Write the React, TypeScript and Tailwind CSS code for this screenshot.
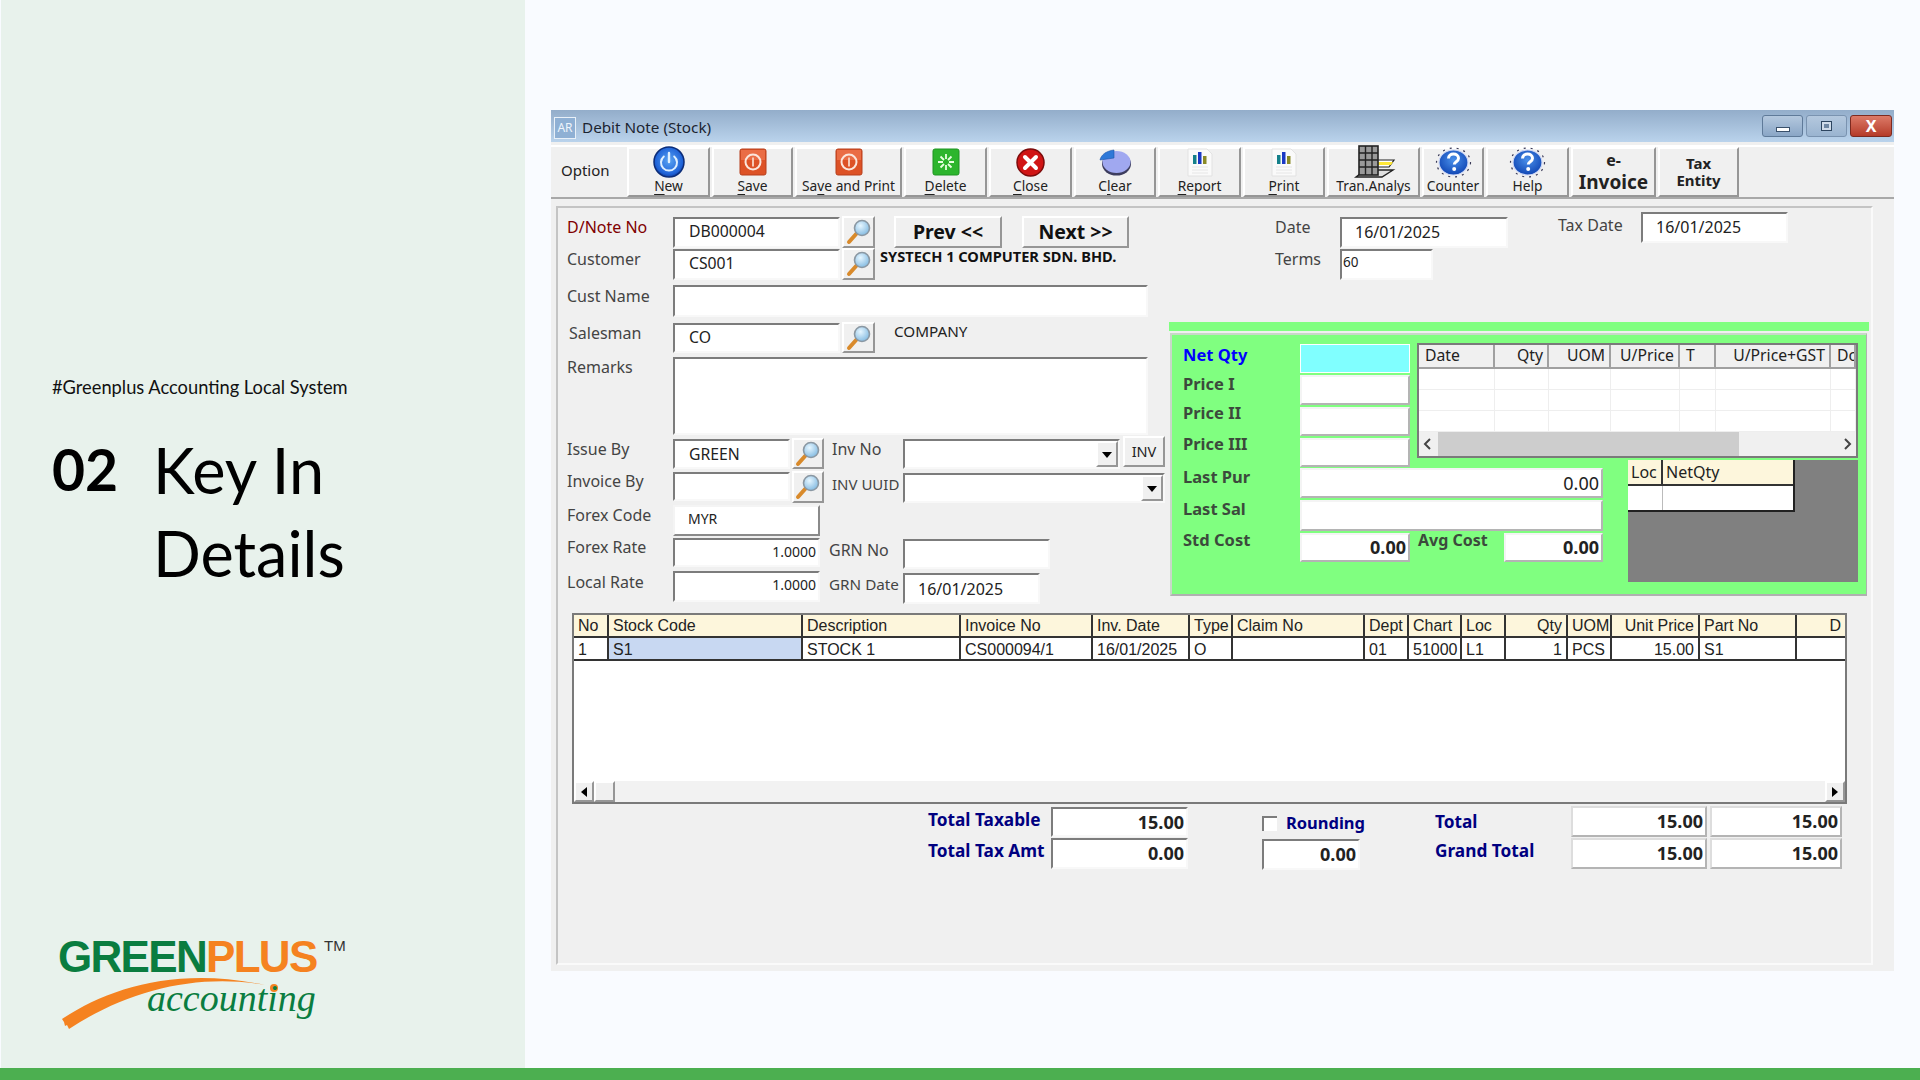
import type { ReactNode } from "react";
import clsx from "clsx";

const Lbl = ({ className, children }: { className?: string; children: ReactNode }) => (
  <div className={clsx("h-[24px] leading-[24px] whitespace-nowrap text-[16px] text-[#444]", className)}>{children}</div>
);

const Field = ({ className, children }: { className?: string; children?: ReactNode }) => (
  <div
    className={clsx(
      "flex items-center overflow-hidden whitespace-nowrap bg-white pb-[2px] border-t-2 border-l-2 border-t-[#7c7c7c] border-l-[#7c7c7c] border-r-2 border-b-2 border-r-[#f8f8f8] border-b-[#f8f8f8] text-[15.75px] text-[#222]",
      className
    )}
  >
    {children}
  </div>
);

const Flat = ({ className, children }: { className?: string; children?: ReactNode }) => (
  <div
    className={clsx(
      "flex items-center justify-end overflow-hidden whitespace-nowrap bg-white border-t-2 border-l-2 border-t-[#f4f4f4] border-l-[#f4f4f4] border-r-2 border-b-2 border-r-[#b4b4b4] border-b-[#b4b4b4] text-[#222]",
      className
    )}
  >
    {children}
  </div>
);

const raised =
  "flex items-center justify-center bg-[#f0f0f0] border-t-2 border-l-2 border-t-white border-l-white border-r-2 border-b-2 border-r-[#969696] border-b-[#969696]";

const Lens = () => (
  <svg width="26" height="26" viewBox="0 0 26 26">
    <defs>
      <radialGradient id="lens" cx="0.4" cy="0.35" r="0.7">
        <stop offset="0" stopColor="#e6f6ff" />
        <stop offset="1" stopColor="#7fb8e0" />
      </radialGradient>
    </defs>
    <path d="M3 23 L11 14" stroke="#d98a2b" strokeWidth="4" strokeLinecap="round" />
    <circle cx="16" cy="9" r="7.5" fill="url(#lens)" stroke="#8b98a3" strokeWidth="1.6" />
  </svg>
);

const LensBtn = ({ className }: { className?: string }) => (
  <div className={clsx(raised, className)}>
    <Lens />
  </div>
);

const Combo = ({ className, btn }: { className?: string; btn: string }) => (
  <Field className={clsx("justify-end !pb-0", className)}>
    <div className={clsx(raised, btn)}>
      <svg width="10" height="6" viewBox="0 0 10 6" className="mt-[2px]">
        <path d="M0 0H10L5 6Z" fill="#000" />
      </svg>
    </div>
  </Field>
);

const IconNew = () => (
  <svg width="32" height="32" viewBox="0 0 32 32" className="shrink-0">
    <defs>
      <radialGradient id="newBlue" cx="0.5" cy="0.45" r="0.6">
        <stop offset="0" stopColor="#5aa4f2" />
        <stop offset="0.75" stopColor="#1f63d8" />
        <stop offset="1" stopColor="#0a2f8f" />
      </radialGradient>
    </defs>
    <circle cx="16" cy="16" r="15" fill="url(#newBlue)" stroke="#0b2c78" strokeWidth="1.5" />
    <path d="M10.8 10.5a8 8 0 1 0 10.4 0" fill="none" stroke="#dff0ff" strokeWidth="2" strokeLinecap="round" />
    <path d="M16 7v9" stroke="#dff0ff" strokeWidth="2.4" strokeLinecap="round" />
  </svg>
);

const IconSave = () => (
  <svg width="28" height="28" viewBox="0 0 28 28" className="shrink-0">
    <rect x="1" y="1" width="26" height="26" rx="2" fill="#dd5226" stroke="#b73f1c" />
    <rect x="2" y="2" width="24" height="10" fill="#ea6d45" />
    <circle cx="14" cy="14" r="7.5" fill="none" stroke="#fbe6dc" strokeWidth="2" />
    <rect x="13" y="9.5" width="2" height="9" fill="#f6c9b5" />
  </svg>
);

const IconDelete = () => (
  <svg width="28" height="28" viewBox="0 0 28 28" className="shrink-0">
    <rect x="1" y="1" width="26" height="26" rx="2" fill="#2db52d" stroke="#1f9422" />
    <path
      d="M14 6v5M14 17v5M6 14h5M17 14h5M8.5 8.5l3.5 3.5M19.5 8.5l-3.5 3.5M8.5 19.5l3.5-3.5M19.5 19.5l-3.5-3.5"
      stroke="#e8ffe0"
      strokeWidth="1.8"
    />
  </svg>
);

const IconClose = () => (
  <svg width="29" height="29" viewBox="0 0 29 29" className="shrink-0">
    <circle cx="14.5" cy="14.5" r="13.5" fill="#d01515" stroke="#7c0a0a" strokeWidth="1.5" />
    <path d="M9 9l11 11M20 9L9 20" stroke="#fff" strokeWidth="4" strokeLinecap="round" />
  </svg>
);

const IconClear = () => (
  <svg width="33" height="27" viewBox="0 0 33 27" className="shrink-0">
    <ellipse cx="17.5" cy="15" rx="14.5" ry="11.5" fill="#3d3d5e" />
    <ellipse cx="17.5" cy="13" rx="14" ry="11" fill="#a0a8f0" />
    <path d="M15 1L15 9L1 11C2 6 7 2 15 1Z" fill="#2e78d8" stroke="#1d55a8" strokeWidth="0.6" />
  </svg>
);

const IconDoc = () => (
  <svg width="26" height="29" viewBox="0 0 26 29" className="shrink-0">
    <path d="M1 1H20L25 6V28H1Z" fill="#fafafa" stroke="#e2e2e2" />
    <rect x="6" y="7" width="3.5" height="9" fill="#14808a" />
    <rect x="11" y="4" width="3.5" height="12" fill="#1a38c4" />
    <rect x="16" y="8" width="3.5" height="8" fill="#8a8a26" />
    <path d="M5 19H21M5 22H21M5 25H21" stroke="#e6e6e6" />
  </svg>
);

const IconTran = () => (
  <svg width="42" height="33" viewBox="0 0 42 33" className="shrink-0 overflow-visible">
    <path d="M3 31L12 24H40L29 31Z" fill="#e0e0e0" stroke="#222" strokeWidth="1.4" />
    <path d="M22 14H41L36 21H22Z" fill="#ffffff" stroke="#222" strokeWidth="1.2" />
    <path d="M22 16H40L38 19H22Z" fill="#ffe838" />
    <rect x="6" y="0" width="19" height="29" fill="#9a9a9a" stroke="#222" strokeWidth="1.6" />
    <path d="M6 7H25M6 14H25M6 21H25M12.5 0V29M19 0V29" stroke="#222" strokeWidth="1.4" />
  </svg>
);

const IconHelp = () => (
  <svg width="37" height="31" viewBox="0 0 37 31" className="shrink-0">
    <defs>
      <radialGradient id="helpBlue" cx="0.5" cy="0.4" r="0.6">
        <stop offset="0" stopColor="#4a90ea" />
        <stop offset="1" stopColor="#1046b4" />
      </radialGradient>
    </defs>
    <ellipse cx="18.5" cy="15.5" rx="17" ry="14.5" fill="none" stroke="#3a3a58" strokeWidth="1.2" strokeDasharray="2 5" />
    <ellipse cx="18.5" cy="15.5" rx="14.5" ry="12.5" fill="url(#helpBlue)" stroke="#cfd8f6" strokeWidth="1.2" />
    <path
      d="M13.5 11.5c0-3 2.3-4.5 5-4.5s5 1.5 5 4.2c0 3.6-4.2 3.4-4.2 6.3"
      fill="none"
      stroke="#fff"
      strokeWidth="3"
    />
    <circle cx="19.2" cy="22" r="2" fill="#fff" />
  </svg>
);

const U = ({ children }: { children: ReactNode }) => <span className="underline underline-offset-[3px]">{children}</span>;

const tools: { w: string; icon: ReactNode; label: ReactNode }[] = [
  { w: "w-[83px]", icon: <IconNew />, label: <><U>N</U>ew</> },
  { w: "w-[81px]", icon: <IconSave />, label: <><U>S</U>ave</> },
  { w: "w-[107px]", icon: <IconSave />, label: <>Sa<U>v</U>e and Print</> },
  { w: "w-[83px]", icon: <IconDelete />, label: <><U>D</U>elete</> },
  { w: "w-[83px]", icon: <IconClose />, label: <><U>C</U>lose</> },
  { w: "w-[82px]", icon: <IconClear />, label: <>C<U>l</U>ear</> },
  { w: "w-[83px]", icon: <IconDoc />, label: <><U>R</U>eport</> },
  { w: "w-[82px]", icon: <IconDoc />, label: <><U>P</U>rint</> },
  { w: "w-[93px]", icon: <IconTran />, label: <>Tran.Analys</> },
  { w: "w-[62px]", icon: <IconHelp />, label: <>Counter</> },
  { w: "w-[83px]", icon: <IconHelp />, label: <>Help</> },
];

const gridCols = [
  { t: "No", v: "1" },
  { t: "Stock Code", v: "S1", sel: true },
  { t: "Description", v: "STOCK 1" },
  { t: "Invoice No", v: "CS000094/1" },
  { t: "Inv. Date", v: "16/01/2025" },
  { t: "Type", v: "O" },
  { t: "Claim No", v: "" },
  { t: "Dept", v: "01" },
  { t: "Chart", v: "51000" },
  { t: "Loc", v: "L1" },
  { t: "Qty", v: "1", right: true },
  { t: "UOM", v: "PCS" },
  { t: "Unit Price", v: "15.00", right: true },
  { t: "Part No", v: "S1" },
  { t: "D", v: "", right: true },
];

const gridTemplate =
  "grid grid-cols-[35px_194px_158px_132px_97px_43px_132px_44px_53px_44px_62px_44px_88px_97px_48px]";

const miniCols = [
  { t: "Date", c: "w-[76px] pl-[6px]" },
  { t: "Qty", c: "w-[54px] justify-end pr-[4px]" },
  { t: "UOM", c: "w-[62px] justify-end pr-[4px]" },
  { t: "U/Price", c: "w-[69px] justify-end pr-[4px]" },
  { t: "T", c: "w-[36px] pl-[6px]" },
  { t: "U/Price+GST", c: "w-[115px] justify-end pr-[4px]" },
  { t: "Do", c: "w-[25px] pl-[6px]" },
];

const Logo = () => (
  <svg width="300" height="110" viewBox="0 0 300 110" className="block">
    <text x="0" y="42" fontFamily="Liberation Sans" fontWeight="700" fontSize="44" letterSpacing="-1.7" fill="#0a7d40">
      GREEN
      <tspan fill="#f58220">PLUS</tspan>
    </text>
    <text x="266" y="21" fontFamily="Liberation Sans" fontSize="15" fill="#333">
      TM
    </text>
    <path d="M4 89C50 58 120 36 207 55C140 43 70 60 11 99L9 95L7 96L6 92Z" fill="#f58220" />
    <circle cx="216" cy="58" r="4" fill="#f58220" />
    <text x="89" y="81" fontFamily="Liberation Serif" fontStyle="italic" fontSize="38" fill="#0a7d40">
      accounting
    </text>
  </svg>
);

export default function App() {
  return (
    <div className="w-[1920px] h-[1080px] flex flex-col overflow-hidden bg-[#f9fbff] font-['Noto_Sans',sans-serif]">
      <div className="flex flex-1 min-h-0">
        {/* Left panel */}
        <aside className="ml-[1px] w-[524px] flex flex-col bg-[#e8f2ec] pl-[51px] pt-[372px] text-black">
          <div className="h-[30px] leading-[30px] text-[18.3px] text-[#111] font-['Lato',sans-serif]">
            #Greenplus Accounting Local System
          </div>
          <div className="mt-[26px] flex font-['Lato',sans-serif] text-[63px] leading-[83px]">
            <div className="w-[101px] font-bold text-[57px]">02</div>
            <div>
              <div>Key In</div>
              <div>Details</div>
            </div>
          </div>
          <div className="mt-auto mb-[28px] ml-[6px]">
            <Logo />
          </div>
        </aside>

        <main className="flex-1 pl-[26px] pt-[110px]">
          {/* Window */}
          <div className="w-[1343px] h-[861px] flex flex-col bg-[#f0f0f0]">
            <div className="h-[32px] flex items-center bg-gradient-to-b from-[#93adca] to-[#bad3ec] pl-[3px] pr-[2px] pt-[3px]">
              <div className="w-[22px] h-[22px] border border-[#e8f0f8] bg-[#8fb0d4] text-[12px] leading-[20px] text-center text-[#eef4fb]">
                AR
              </div>
              <div className="ml-[6px] text-[15.25px] text-[#1b2430]">Debit Note (Stock)</div>
              <div className="ml-auto flex gap-[3px] pb-[3px]">
                <div className="w-[41px] h-[22px] rounded-[3px] border border-[#5f7a99] bg-gradient-to-b from-[#b4c8de] to-[#8aa6c6] flex items-end justify-center pb-[4px]">
                  <div className="w-[14px] h-[5px] bg-white border border-[#39506b]" />
                </div>
                <div className="w-[41px] h-[22px] rounded-[3px] border border-[#7a93b0] bg-gradient-to-b from-[#b4c8de] to-[#9ab4d0] flex items-center justify-center">
                  <div className="w-[11px] h-[10px] bg-[#cfdbe9] border border-[#2d4560] flex items-center justify-center">
                    <div className="w-[5px] h-[4px] bg-[#6f87a3]" />
                  </div>
                </div>
                <div className="w-[42px] h-[22px] rounded-[3px] border border-[#7d2a20] bg-gradient-to-b from-[#dc7a68] to-[#b53a28] flex items-center justify-center text-white text-[16px] font-bold leading-none">
                  X
                </div>
              </div>
            </div>

            {/* Toolbar */}
            <div className="mt-[3px] h-[54px] flex gap-[2px] bg-[#f0f0f0] border-t-2 border-t-white border-b-2 border-b-[#a8a8a8] text-[14px] text-[#222]">
              <div className="w-[74px] pl-[10px] leading-[47px] text-[15px]">Option</div>
              {tools.map((t, i) => (
                <div key={i} className={clsx(raised, t.w, "flex-col !justify-between")}>
                  <div className="h-[26px] min-h-0 flex items-center justify-center">{t.icon}</div>
                  <div className="whitespace-nowrap leading-[18px] text-[13.75px]">{t.label}</div>
                </div>
              ))}
              <div className={clsx(raised, "w-[85px] flex-col font-bold leading-none")}>
                <div className="text-[16px] leading-[20px]">e-</div>
                <div className="text-[19px] leading-[24px]">Invoice</div>
              </div>
              <div className={clsx(raised, "w-[81px] flex-col font-bold text-[15px] leading-[17px]")}>
                <div>Tax</div>
                <div>Entity</div>
              </div>
            </div>

            {/* Form panel */}
            <div className="ml-[5px] mt-[7px] w-[1317px] h-[759px] flex flex-col border-t-2 border-l-2 border-t-[#c4c4c4] border-l-[#c4c4c4] border-r-2 border-b-2 border-r-[#fafafa] border-b-[#fafafa]">
              <div className="flex">
                {/* Left fields */}
                <div className="w-[598px] ml-[9px] pt-[8px] flex flex-col">
                  <div className="flex h-[32px]">
                    <Lbl className="w-[106px] -mt-[1px] !text-[#800000]">D/Note No</Lbl>
                    <Field className="w-[167px] h-[31px] mt-[1px] pl-[14px]">DB000004</Field>
                    <LensBtn className="ml-[2px] w-[33px] h-[32px]" />
                    <div className={clsx(raised, "ml-[19px] w-[108px] h-[32px] pb-[1px] text-[19.5px] font-bold text-[#111]")}>Prev &lt;&lt;</div>
                    <div className={clsx(raised, "ml-[20px] w-[107px] h-[32px] pb-[1px] text-[19.5px] font-bold text-[#111]")}>Next &gt;&gt;</div>
                  </div>
                  <div className="flex h-[31px] mt-[1px]">
                    <Lbl className="w-[106px] -mt-[2px]">Customer</Lbl>
                    <Field className="w-[167px] h-[31px] pl-[14px]">CS001</Field>
                    <LensBtn className="ml-[2px] w-[33px] h-[32px] -mt-[1px]" />
                    <div className="ml-[5px] -mt-[5px] h-[24px] leading-[24px] whitespace-nowrap text-[14.6px] font-bold text-[#111]">
                      SYSTECH 1 COMPUTER SDN. BHD.
                    </div>
                  </div>
                  <div className="flex h-[32px] mt-[5px]">
                    <Lbl className="w-[106px] -mt-[1px]">Cust Name</Lbl>
                    <Field className="w-[475px] h-[32px]" />
                  </div>
                  <div className="flex h-[30px] mt-[6px]">
                    <Lbl className="w-[106px] -mt-[2px] pl-[2px]">Salesman</Lbl>
                    <Field className="w-[167px] h-[30px] pl-[14px] !pb-0">CO</Field>
                    <LensBtn className="ml-[2px] w-[33px] h-[31px] -mt-[1px]" />
                    <div className="ml-[19px] -mt-[4px] h-[24px] leading-[24px] text-[15.25px] text-[#222]">COMPANY</div>
                  </div>
                  <div className="flex h-[78px] mt-[4px]">
                    <Lbl className="w-[106px] -mt-[2px]">Remarks</Lbl>
                    <Field className="w-[475px] h-[78px]" />
                  </div>
                  <div className="flex h-[30px] mt-[4px]">
                    <Lbl className="w-[106px] -mt-[2px]">Issue By</Lbl>
                    <Field className="w-[117px] h-[30px] pl-[14px] !pb-0 pt-[2px]">GREEN</Field>
                    <LensBtn className="ml-[2px] w-[32px] h-[31px] -mt-[1px]" />
                    <Lbl className="ml-[8px] w-[71px] -mt-[2px]">Inv No</Lbl>
                    <Combo className="w-[217px] h-[30px]" btn="w-[22px] h-[26px]" />
                    <div className={clsx(raised, "ml-[3px] -mt-[3px] w-[42px] h-[31px] text-[14.5px] text-[#222]")}>INV</div>
                  </div>
                  <div className="flex h-[31px] mt-[3px]">
                    <Lbl className="w-[106px] -mt-[3px]">Invoice By</Lbl>
                    <Field className="w-[117px] h-[29px]" />
                    <LensBtn className="ml-[2px] w-[32px] h-[32px] -mt-[1px]" />
                    <Lbl className="ml-[8px] w-[71px] !text-[15px]">INV UUID</Lbl>
                    <Combo className="w-[262px] h-[30px] mt-[1px]" btn="w-[22px] h-[26px]" />
                  </div>
                  <div className="flex h-[31px] mt-[2px]">
                    <Lbl className="w-[106px] -mt-[2px]">Forex Code</Lbl>
                    <Field className="w-[147px] h-[31px] pl-[13px] !pb-[4px] !text-[14px] !border-t-[#f4f4f4] !border-l-[#f4f4f4] !border-r-[#8a8a8a] !border-b-[#8a8a8a]">MYR</Field>
                  </div>
                  <div className="flex h-[31px] mt-[2px]">
                    <Lbl className="w-[106px] -mt-[3px]">Forex Rate</Lbl>
                    <Field className="w-[147px] h-[29px] justify-end pr-[2px] !pb-[3px] !text-[14px]">1.0000</Field>
                    <Lbl className="ml-[9px] w-[74px]">GRN No</Lbl>
                    <Field className="w-[147px] h-[30px] mt-[1px]" />
                  </div>
                  <div className="flex h-[33px] mt-[2px]">
                    <Lbl className="w-[106px] -mt-[1px]">Local Rate</Lbl>
                    <Field className="w-[147px] h-[31px] justify-end pr-[2px] !pb-[4px] !text-[14px]">1.0000</Field>
                    <Lbl className="ml-[9px] w-[74px] mt-[1px] !text-[15.25px]">GRN Date</Lbl>
                    <Field className="w-[137px] h-[31px] mt-[2px] pl-[13px] !pb-0 !text-[16px]">16/01/2025</Field>
                  </div>
                </div>

                {/* Right block */}
                <div className="ml-[4px] w-[700px] flex flex-col">
                  <div className="h-[114px] pl-[106px] flex">
                    <div className="w-[283px] pt-[9px] flex flex-col gap-[1px]">
                      <div className="flex h-[31px]">
                        <Lbl className="w-[65px] -mt-[2px]">Date</Lbl>
                        <Field className="w-[168px] h-[31px] pl-[13px] !text-[16px]">16/01/2025</Field>
                      </div>
                      <div className="flex h-[31px]">
                        <Lbl className="w-[65px] -mt-[2px]">Terms</Lbl>
                        <Field className="w-[93px] h-[31px] pl-[1px] !pb-[5px] !text-[13.5px]">60</Field>
                      </div>
                    </div>
                    <div className="flex pt-[4px]">
                      <Lbl className="w-[83px] mt-[1px]">Tax Date</Lbl>
                      <Field className="w-[147px] h-[31px] pl-[13px] !text-[16px]">16/01/2025</Field>
                    </div>
                  </div>
                  <div className="h-[9px] bg-[#80ff80]" />
                  {/* Green stock panel */}
                  <div className="ml-[1px] mt-[2px] w-[697px] h-[263px] bg-[#80ff80] border-t-2 border-l-2 border-t-[#c8d8c8] border-l-[#c8d8c8] border-r border-b-2 border-r-[#b0b0b0] border-b-[#b0b0b0] pt-[9px] pl-[11px] text-[15px]">
                    <div className="flex h-[124px]">
                      <div className="flex flex-col">
                        <div className="flex h-[29px]">
                          <Lbl className="w-[117px] -mt-[1px] font-bold !text-[16.5px] !text-[#0000ff]">Net Qty</Lbl>
                          <div className="w-[110px] h-[29px] bg-[#80ffff] border border-white" />
                        </div>
                        <div className="flex h-[30px] mt-[2px]">
                          <Lbl className="w-[117px] -mt-[3px] font-bold !text-[16.5px] !text-[#3c4a3c]">Price I</Lbl>
                          <Flat className="w-[110px] h-[30px]" />
                        </div>
                        <div className="flex h-[29px] mt-[2px]">
                          <Lbl className="w-[117px] -mt-[6px] font-bold !text-[16.5px] !text-[#3c4a3c]">Price II</Lbl>
                          <Flat className="w-[110px] h-[29px]" />
                        </div>
                        <div className="flex h-[29px] mt-[2px]">
                          <Lbl className="w-[117px] -mt-[6px] font-bold !text-[16.5px] !text-[#3c4a3c]">Price III</Lbl>
                          <Flat className="w-[110px] h-[29px]" />
                        </div>
                      </div>
                      {/* Price history grid */}
                      <div className="ml-[7px] -mt-[1px] w-[441px] h-[115px] flex flex-col bg-white border-2 border-[#7a7a7a]">
                        <div className="flex h-[24px] shrink-0 text-[15.75px] text-[#222]">
                          {miniCols.map((c) => (
                            <div key={c.t} className={clsx("flex items-center overflow-hidden bg-[#f0f0f0] border-r-2 border-b-2 border-r-[#a0a0a0] border-b-[#a0a0a0]", c.c)}>
                              {c.t}
                            </div>
                          ))}
                        </div>
                        {[0, 1, 2].map((r) => (
                          <div key={r} className="flex h-[21px] shrink-0">
                            {miniCols.map((c) => (
                              <div key={c.t} className={clsx("border-r border-b border-[#eeeeee]", c.c)} />
                            ))}
                          </div>
                        ))}
                        <div className="flex-1 flex items-center bg-[#f0f0f0] pr-[4px] pl-[4px] min-h-0">
                          <svg width="10" height="12" viewBox="0 0 10 12">
                            <path d="M7 1L2 6L7 11" fill="none" stroke="#444" strokeWidth="2" />
                          </svg>
                          <div className="ml-[5px] w-[301px] h-full bg-[#cdcdcd]" />
                          <svg width="10" height="12" viewBox="0 0 10 12" className="ml-auto">
                            <path d="M3 1L8 6L3 11" fill="none" stroke="#444" strokeWidth="2" />
                          </svg>
                        </div>
                      </div>
                    </div>
                    <div className="flex">
                      <div className="flex flex-col w-[420px]">
                        <div className="flex h-[30px]">
                          <Lbl className="w-[117px] -mt-[3px] font-bold !text-[16.5px] !text-[#3c4a3c]">Last Pur</Lbl>
                          <Flat className="w-[303px] h-[30px] pr-[2px] text-[18px]">0.00</Flat>
                        </div>
                        <div className="flex h-[31px] mt-[2px]">
                          <Lbl className="w-[117px] -mt-[3px] font-bold !text-[16.5px] !text-[#3c4a3c]">Last Sal</Lbl>
                          <Flat className="w-[303px] h-[31px]" />
                        </div>
                        <div className="flex h-[29px] mt-[2px]">
                          <Lbl className="w-[117px] -mt-[5px] font-bold !text-[16.5px] !text-[#3c4a3c]">Std Cost</Lbl>
                          <Flat className="w-[110px] h-[29px] pr-[2px] text-[18px] font-bold">0.00</Flat>
                          <Lbl className="ml-[8px] w-[86px] -mt-[5px] font-bold !text-[16px] !text-[#3c4a3c]">Avg Cost</Lbl>
                          <Flat className="w-[99px] h-[29px] pr-[2px] text-[18px] font-bold">0.00</Flat>
                        </div>
                      </div>
                      {/* Location grid */}
                      <div className="ml-[25px] -mt-[8px] w-[230px] h-[122px] bg-[#808080]">
                        <div className="w-[167px] border-r-2 border-b-2 border-[#222] text-[16px] text-[#222]">
                          <div className="flex h-[26px]">
                            <div className="w-[35px] pl-[3px] bg-[#fdf6dc] border-r-2 border-b-2 border-[#333] leading-[24px]">Loc</div>
                            <div className="flex-1 pl-[3px] bg-[#fdf6dc] border-b-2 border-[#333] leading-[24px]">NetQty</div>
                          </div>
                          <div className="flex h-[24px] bg-white">
                            <div className="w-[35px] border-r border-[#bbbbbb]" />
                          </div>
                        </div>
                      </div>
                    </div>
                  </div>
                </div>
              </div>

              {/* Detail grid */}
              <div className="ml-[14px] mt-[9px] w-[1275px] h-[191px] flex flex-col bg-white border-2 border-[#7a7a7a] font-['Liberation_Sans',sans-serif] text-[16px] text-[#222]">
                <div className={clsx(gridTemplate, "h-[23px] shrink-0 bg-[#fdf6dc] border-b-2 border-[#333]")}>
                  {gridCols.map((c) => (
                    <div key={c.t} className={clsx("px-[4px] overflow-hidden whitespace-nowrap leading-[22px] border-r-2 border-[#333] last:border-r-0", c.right && "text-right")}>
                      {c.t}
                    </div>
                  ))}
                </div>
                <div className={clsx(gridTemplate, "h-[23px] shrink-0 border-b-2 border-[#333]")}>
                  {gridCols.map((c) => (
                    <div key={c.t} className={clsx("px-[4px] overflow-hidden whitespace-nowrap leading-[23px] border-r-2 border-[#333] last:border-r-0", c.right && "text-right", c.sel && "bg-[#c8d8f2]")}>
                      {c.v}
                    </div>
                  ))}
                </div>
                <div className="flex-1" />
                <div className="h-[21px] flex items-stretch bg-[#f2f2f2]">
                  <div className={clsx(raised, "w-[20px]")}>
                    <svg width="6" height="10" viewBox="0 0 6 10">
                      <path d="M6 0V10L0 5Z" fill="#000" />
                    </svg>
                  </div>
                  <div className={clsx(raised, "w-[21px]")} />
                  <div className={clsx(raised, "ml-auto w-[20px]")}>
                    <svg width="6" height="10" viewBox="0 0 6 10">
                      <path d="M0 0V10L6 5Z" fill="#000" />
                    </svg>
                  </div>
                </div>
              </div>

              {/* Totals */}
              <div className="mt-[2px] ml-[370px] flex">
                <div className="w-[260px] flex flex-col">
                  <div className="flex h-[31px] pt-[1px]">
                    <Lbl className="w-[123px] mt-[1px] font-bold !text-[17.25px] !text-[#000080]">Total Taxable</Lbl>
                    <Field className="w-[137px] h-[30px] justify-end pr-[2px] !pb-0 !text-[18px] font-bold">15.00</Field>
                  </div>
                  <div className="flex h-[31px] mt-[1px]">
                    <Lbl className="w-[123px] mt-[1px] font-bold !text-[17.25px] !text-[#000080]">Total Tax Amt</Lbl>
                    <Field className="w-[137px] h-[31px] justify-end pr-[2px] !pb-0 !text-[18px] font-bold">0.00</Field>
                  </div>
                </div>
                <div className="ml-[74px] w-[103px] flex flex-col">
                  <div className="flex h-[33px]">
                    <div className="mt-[10px] w-[15px] h-[15px] bg-white border-t-2 border-l-2 border-[#7c7c7c]" />
                    <Lbl className="ml-[9px] mt-[5px] font-bold !text-[16.5px] !text-[#000080]">Rounding</Lbl>
                  </div>
                  <Field className="w-[98px] h-[31px] justify-end pr-[2px] !pb-0 !text-[18px] font-bold">0.00</Field>
                </div>
                <div className="ml-[70px] flex flex-col">
                  <div className="flex h-[31px]">
                    <Lbl className="w-[136px] mt-[4px] font-bold !text-[17.25px] !text-[#000080]">Total</Lbl>
                    <Flat className="w-[136px] h-[31px] pr-[2px] text-[18px] font-bold !border-t-[#dddddd] !border-l-[#dddddd]">15.00</Flat>
                    <Flat className="ml-[3px] w-[132px] h-[31px] pr-[2px] text-[18px] font-bold !border-t-[#dddddd] !border-l-[#dddddd]">15.00</Flat>
                  </div>
                  <div className="flex h-[31px] mt-[1px]">
                    <Lbl className="w-[136px] mt-[1px] font-bold !text-[17.25px] !text-[#000080]">Grand Total</Lbl>
                    <Flat className="w-[136px] h-[31px] pr-[2px] text-[18px] font-bold !border-t-[#dddddd] !border-l-[#dddddd]">15.00</Flat>
                    <Flat className="ml-[3px] w-[132px] h-[31px] pr-[2px] text-[18px] font-bold !border-t-[#dddddd] !border-l-[#dddddd]">15.00</Flat>
                  </div>
                </div>
              </div>
            </div>
          </div>
        </main>
      </div>
      <div className="h-[12px] bg-[#4caf50]" />
    </div>
  );
}
